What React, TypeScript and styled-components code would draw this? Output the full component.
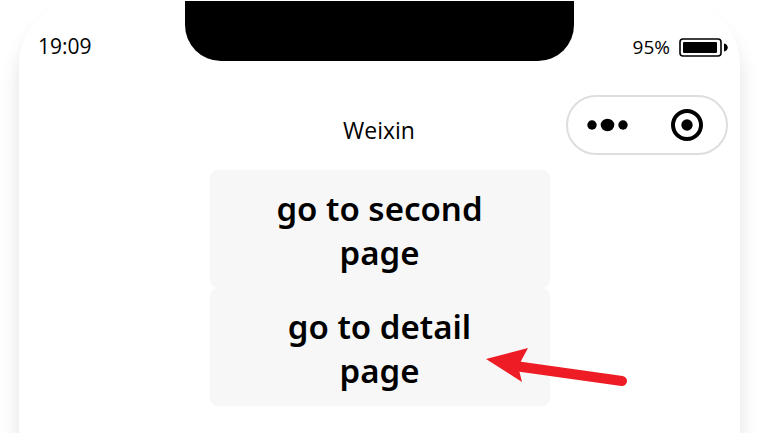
import React from 'react';
import styled, { createGlobalStyle } from 'styled-components';

const GlobalStyle = createGlobalStyle`
  *, *::before, *::after {
    box-sizing: border-box;
  }
  body {
    margin: 0;
    background: #fff;
    color: #000;
    font-family: "Open Sans", "Noto Sans", sans-serif;
  }
`;

const Stage = styled.div`
  padding: 1px 18px 0 19px;
`;

const Phone = styled.main`
  min-height: calc(100vh - 1px);
  border-radius: 64px 64px 0 0;
  background: #fff;
  box-shadow: 0 16px 20px rgba(0, 0, 0, 0.12);
`;

const StatusBar = styled.header`
  display: grid;
  grid-template-columns: 1fr 54% 1fr;
  align-items: start;
`;

const Clock = styled.time`
  padding: 31px 0 0 19px;
  font-size: 21px;
  line-height: 28px;
`;

const Notch = styled.div`
  height: 60px;
  border-radius: 0 0 36px 36px;
  background: #000;
`;

const Power = styled.div`
  display: flex;
  align-items: center;
  justify-content: flex-end;
  gap: 9px;
  padding: 32px 12px 0 0;
  font-size: 19px;
  line-height: 28px;
`;

const NavBar = styled.nav`
  display: grid;
  grid-template-columns: 1fr auto 1fr;
  align-items: center;
  padding: 34px 12px 0 11px;
`;

const Title = styled.h1`
  grid-column: 2;
  margin: 0;
  padding-top: 9px;
  font-size: 23px;
  font-weight: 400;
  line-height: 32px;
`;

const Capsule = styled.div`
  justify-self: end;
  display: flex;
  width: 162px;
  height: 60px;
  border: 2px solid #dedede;
  border-radius: 30px;
  overflow: hidden;
`;

const CapsuleButton = styled.button`
  flex: 1;
  display: flex;
  align-items: center;
  justify-content: center;
  padding: 0;
  border: 0;
  background: transparent;
`;

const Actions = styled.section`
  position: relative;
  width: 340px;
  margin: 15px auto 0;
`;

const PageButton = styled.button`
  display: block;
  width: 100%;
  padding: 17px 48px 13px;
  border: 0;
  border-radius: 8px;
  background: #f7f7f7;
  color: #000;
  font-family: "Noto Sans", sans-serif;
  font-size: 33px;
  font-weight: 600;
  line-height: 44px;
  text-align: center;
`;

const Pointer = styled.svg`
  position: absolute;
  left: 275px;
  top: 176px;
  pointer-events: none;
`;

export default function App() {
  return (
    <>
      <GlobalStyle />
      <Stage>
        <Phone>
          <StatusBar>
            <Clock>19:09</Clock>
            <Notch />
            <Power>
              <span>95%</span>
              <svg width="49" height="19" viewBox="0 0 49 19" aria-hidden="true">
                <rect x="1" y="1" width="41" height="17" rx="3" fill="none" stroke="#000" strokeWidth="1.6" />
                <rect x="4" y="4" width="34" height="11" rx="1" />
                <path d="M45 5.5c5 1 5 7 0 8z" />
              </svg>
            </Power>
          </StatusBar>
          <NavBar>
            <Title>Weixin</Title>
            <Capsule>
              <CapsuleButton type="button" aria-label="More options">
                <svg width="42" height="14" viewBox="0 0 42 14">
                  <circle cx="5" cy="7" r="4.7" />
                  <ellipse cx="20.5" cy="7" rx="6.8" ry="6.2" />
                  <circle cx="36" cy="7" r="4.7" />
                </svg>
              </CapsuleButton>
              <CapsuleButton type="button" aria-label="Close">
                <svg width="32" height="32" viewBox="0 0 32 32">
                  <circle cx="16" cy="16" r="14" fill="none" stroke="#000" strokeWidth="4" />
                  <circle cx="16" cy="16" r="5.7" />
                </svg>
              </CapsuleButton>
            </Capsule>
          </NavBar>
          <Actions>
            <PageButton type="button">go to second page</PageButton>
            <PageButton type="button">go to detail page</PageButton>
            <Pointer width="144" height="42" viewBox="0 0 144 42" aria-hidden="true">
              <path d="M30 20L137 35" stroke="#ee1c24" strokeWidth="10" strokeLinecap="round" />
              <path d="M1 13L43 2L36 15L34 24L37 36Z" fill="#ee1c24" />
            </Pointer>
          </Actions>
        </Phone>
      </Stage>
    </>
  );
}
